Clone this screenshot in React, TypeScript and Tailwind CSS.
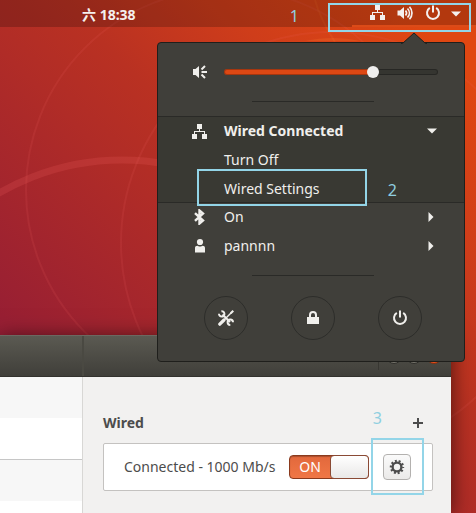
import type { ReactNode } from "react";

type IconProps = { className?: string };

function WiredIcon({ className = "size-[15px]" }: IconProps) {
  return (
    <svg viewBox="0 0 15 15" className={className} fill="currentColor" aria-hidden="true">
      <path d="M5 0h5v5H8v2h5v3h2v5h-5v-5h2V8H3v2h2v5H0v-5h2V7h5V5H5z" />
    </svg>
  );
}

function VolumeIcon({ className = "size-4" }: IconProps) {
  return (
    <svg viewBox="0 0 16 16" className={className} aria-hidden="true">
      <path d="M0.500 5.500H3L7 2v12l-4-3.500H0.500z" fill="currentColor" />
      <path
        d="M8.500 5.500c1.300 1.500 1.300 3.500 0 5M10.500 3.500c2.500 2.600 2.500 6.400 0 9M12.500 1.800c3.300 3.600 3.300 8.800 0 12.400"
        fill="none"
        stroke="currentColor"
        strokeWidth="1.700"
      />
    </svg>
  );
}

function SpeakerRaysIcon({ className = "size-4" }: IconProps) {
  return (
    <svg viewBox="0 0 16 16" className={className} aria-hidden="true">
      <path d="M1 5h2.500L7 2v12l-3.500-3H1z" fill="currentColor" />
      <path d="M9.500 5.500l3.500-3.500M9.500 8H15M9.500 10.500l3.500 3.500" fill="none" stroke="currentColor" strokeWidth="2" />
    </svg>
  );
}

function PowerIcon({ className = "size-4" }: IconProps) {
  return (
    <svg viewBox="0 0 16 16" className={className} fill="none" stroke="currentColor" strokeWidth="2" aria-hidden="true">
      <path d="M4.800 2.900a6 6 0 1 0 6.400 0" />
      <path d="M8 0.500v7" />
    </svg>
  );
}

function BluetoothIcon({ className = "size-4" }: IconProps) {
  return (
    <svg viewBox="0 0 16 16" className={className} fill="none" stroke="currentColor" strokeWidth="2.400" aria-hidden="true">
      <path d="M3 4.200l8 7.300-3.500 3V1.500l3.500 3-8 7.300" />
    </svg>
  );
}

function UserIcon({ className = "size-4" }: IconProps) {
  return (
    <svg viewBox="0 0 16 16" className={className} fill="currentColor" aria-hidden="true">
      <circle cx="8" cy="4" r="3.100" />
      <path d="M3 14.500V10c0-1.500 1-2.300 2.500-2.300C6.300 8.600 9.700 8.600 10.500 7.700 12 7.700 13 8.500 13 10v4.500z" />
    </svg>
  );
}

function ToolsIcon({ className = "size-4" }: IconProps) {
  return (
    <svg viewBox="0 0 16 16" className={className} aria-hidden="true">
      <path d="M1.800 14.200L6 10" fill="none" stroke="currentColor" strokeWidth="3.200" strokeLinecap="round" />
      <path d="M6 10l7.500-7.500" fill="none" stroke="currentColor" strokeWidth="1.400" />
      <path d="M12 2.500L14.500 0 16 1.500 13.500 4z" fill="currentColor" />
      <path d="M4.500 4.500l7.500 7.500" fill="none" stroke="currentColor" strokeWidth="2" />
      <path
        d="M3.400 1.200A2.700 2.700 0 1 1 1 3.800M15 12.200a2.700 2.700 0 1 0-2.700 2.800"
        fill="none"
        stroke="currentColor"
        strokeWidth="2"
      />
    </svg>
  );
}

function LockIcon({ className = "size-4" }: IconProps) {
  return (
    <svg viewBox="0 0 16 16" className={className} aria-hidden="true">
      <path d="M2 7h12v7H2z" fill="currentColor" />
      <path d="M5 7.500V5a3 3 0 0 1 6 0v2.500" fill="none" stroke="currentColor" strokeWidth="2" />
    </svg>
  );
}

function GearIcon({ className = "size-4" }: IconProps) {
  return (
    <svg viewBox="0 0 16 16" className={className} fill="none" stroke="currentColor" aria-hidden="true">
      <circle cx="8" cy="8" r="4.400" strokeWidth="2.400" />
      <circle cx="8" cy="8" r="6" strokeWidth="2.400" strokeDasharray="1.900 1.870" strokeDashoffset="0.950" />
    </svg>
  );
}

function CaretDown() {
  return (
    <svg viewBox="0 0 10 6" className="h-[6px] w-[10px]" fill="currentColor" aria-hidden="true">
      <path d="M0 0.500h10L5 5.500z" />
    </svg>
  );
}

function CaretRight() {
  return (
    <svg viewBox="0 0 6 10" className="mr-[3px] h-[10px] w-[6px]" fill="currentColor" aria-hidden="true">
      <path d="M0.500 0v10l5-5z" />
    </svg>
  );
}

function Wallpaper() {
  return (
    <svg viewBox="0 0 476 513" preserveAspectRatio="xMinYMin slice" className="absolute inset-0 size-full" fill="none" aria-hidden="true">
      <circle cx="122" cy="405" r="245" stroke="#f0606033" strokeWidth="7" />
      <circle cx="227" cy="190" r="201" stroke="#f0606022" strokeWidth="2" />
      <circle cx="332" cy="243" r="211" stroke="#f0606022" strokeWidth="2" />
      <path d="M315 0c4 15 11 28 20 42" stroke="#ff803022" strokeWidth="2" />
      <path d="M305 41c18-4 38-4 55 0z" fill="#ff803033" />
    </svg>
  );
}

function MenuRow({ icon, label, bold, caret }: { icon?: ReactNode; label: string; bold?: boolean; caret?: ReactNode }) {
  return (
    <button type="button" className="flex h-[29px] w-full items-center pr-[27px] pb-px pl-[34px] text-left">
      <span className="w-8 shrink-0">{icon}</span>
      <span className={bold ? "grow font-bold" : "grow"}>{label}</span>
      {caret}
    </button>
  );
}

function Separator() {
  return <hr className="mr-[90px] ml-auto w-[122px] border-0 border-t border-[#2a2a27]" />;
}

function RoundButton({ label, children }: { label: string; children: ReactNode }) {
  return (
    <button
      type="button"
      aria-label={label}
      className="flex size-11 items-center justify-center rounded-full border border-[#2d2d2a]"
    >
      {children}
    </button>
  );
}

function SystemMenu() {
  return (
    <section
      aria-label="System menu"
      className="absolute top-[42px] right-[11px] w-[308px] rounded-[4px] border border-[#1f1f1c] bg-[#403f3a] text-[14px] leading-5 text-[#f0efec]"
    >
      <svg viewBox="0 0 26 12" className="absolute -top-[11px] right-[37px] h-3 w-[26px]" aria-hidden="true">
        <path d="M0 12L2 11 13 1l11 10 2 1z" fill="#403f3a" />
        <path d="M0 11.500L2 11 13 1l11 10 2 .500" fill="none" stroke="#1f1f1c" />
      </svg>

      <div className="flex h-[58px] items-center pr-[26px] pl-[34px]">
        <SpeakerRaysIcon />
        <input
          type="range"
          aria-label="Volume"
          min={0}
          max={100}
          defaultValue={71}
          className="ml-4 h-[14px] min-w-0 grow appearance-none bg-transparent [&::-webkit-slider-runnable-track]:h-[6px] [&::-webkit-slider-runnable-track]:rounded-full [&::-webkit-slider-runnable-track]:bg-[linear-gradient(to_right,#dd4814_70%,#353530_70%)] [&::-webkit-slider-runnable-track]:shadow-[inset_0_0_0_1px_#00000040] [&::-webkit-slider-thumb]:mt-[-3px] [&::-webkit-slider-thumb]:size-3 [&::-webkit-slider-thumb]:appearance-none [&::-webkit-slider-thumb]:rounded-full [&::-webkit-slider-thumb]:bg-[#f0efee]"
        />
      </div>
      <Separator />

      <div className="mt-[14px] h-[87px] border-y border-[#2a2a27] bg-[#393933]">
        <MenuRow icon={<WiredIcon />} label="Wired Connected" bold caret={<CaretDown />} />
        <MenuRow label="Turn Off" />
        <MenuRow label="Wired Settings" />
      </div>
      <MenuRow icon={<BluetoothIcon />} label="On" caret={<CaretRight />} />
      <MenuRow icon={<UserIcon />} label="pannnn" caret={<CaretRight />} />

      <div className="pt-[14px]">
        <Separator />
      </div>
      <div className="flex justify-between pt-5 pr-[42px] pb-[21px] pl-[46px]">
        <RoundButton label="Settings">
          <ToolsIcon />
        </RoundButton>
        <RoundButton label="Lock">
          <LockIcon />
        </RoundButton>
        <RoundButton label="Power off">
          <PowerIcon />
        </RoundButton>
      </div>
    </section>
  );
}

function WindowControls() {
  return (
    <div className="flex h-7 items-center gap-1 self-center border-l border-[#383732] pr-[9px] pl-[7px]">
      <button type="button" aria-label="Minimize" className="size-4 rounded-full border border-[#2f2f2b] bg-[#77756d]" />
      <button type="button" aria-label="Maximize" className="size-4 rounded-full border border-[#2f2f2b] bg-[#77756d]" />
      <button type="button" aria-label="Close" className="size-4 rounded-full border border-[#7a3013] bg-[#e9501c]" />
    </div>
  );
}

function SettingsWindow() {
  return (
    <section
      aria-label="Network settings"
      className="absolute top-[335px] right-[25px] bottom-0 left-0 flex flex-col bg-[#f2f1f0] text-[14px] leading-5 text-[#4c4c4c] shadow-[0_3px_20px_#00000099]"
    >
      <header className="flex h-[42px] shrink-0 border-t border-b border-t-[#6b6961] border-b-[#33322e] bg-linear-to-b from-[#5b5a52] to-[#403f3a]">
        <div className="w-[84px] border-r-2 border-[#4a4942]" />
        <div className="grow" />
        <WindowControls />
      </header>
      <div className="flex min-h-0 grow">
        <nav aria-label="Panels" className="w-[83px] shrink-0 overflow-hidden border-r border-[#d8d7d5] bg-white">
          <div className="h-[41px] bg-[#f7f7f7]" />
          <div className="h-[42px] border-b border-[#c6c6c6]" />
          <div className="h-[41px] bg-[#f7f7f7]" />
        </nav>
        <main className="grow pt-9 pr-[18px] pl-5">
          <div className="flex h-5 items-center justify-between pr-[9px]">
            <h1 className="font-bold">Wired</h1>
            <button type="button" aria-label="Add connection">
              <svg viewBox="0 0 12 12" className="size-3" stroke="currentColor" strokeWidth="2" aria-hidden="true">
                <path d="M6 1v10M1 6h10" />
              </svg>
            </button>
          </div>
          <div className="mt-[10px] flex h-12 items-center rounded-[2px] border border-[#c4c2c0] bg-white pr-[21px] pl-5">
            <span className="grow whitespace-nowrap">Connected - 1000 Mb/s</span>
            <label className="flex h-6 w-20 rounded-[4px] border border-[#8a3a1d] bg-linear-to-b from-[#e2683c] to-[#f07746] shadow-[inset_0_1px_1px_#00000040]">
              <input type="checkbox" role="switch" defaultChecked className="sr-only" />
              <span className="w-10 text-center leading-[22px] text-white">ON</span>
              <span className="-my-px -mr-px grow rounded-[4px] border border-[#8a4a35] bg-linear-to-b from-white to-[#e9e8e7]" />
            </label>
            <button
              type="button"
              aria-label="Connection options"
              className="ml-[14px] flex h-[26px] w-7 items-center justify-center rounded-[4px] border border-[#b3b1af] bg-linear-to-b from-[#fafafa] to-[#ebeae9]"
            >
              <GearIcon />
            </button>
          </div>
        </main>
      </div>
    </section>
  );
}

function TopBar() {
  return (
    <header className="relative flex h-[27px] items-center justify-between bg-[#00000033] pr-[15px] pl-[82px] text-[14px] font-bold text-[#f4f0ee]">
      <time className="pt-[2px] leading-5">六 18:38</time>
      <div className="flex items-center gap-[10px]">
        <div className="flex gap-3 pb-px">
          <WiredIcon />
          <VolumeIcon />
          <PowerIcon />
        </div>
        <CaretDown />
      </div>
      <div className="absolute right-0 bottom-0 h-[2px] w-[124px] bg-[#dc4b18]" />
    </header>
  );
}

function Callouts() {
  return (
    <div className="pointer-events-none text-[16px] leading-5 text-[#8fcfe0]">
      <div className="absolute top-[3px] right-[5px] h-[29px] w-[143px] border-2 border-[#93d5e8]" />
      <span className="absolute top-[6px] right-[177px]">1</span>
      <div className="absolute top-[169px] right-[109px] h-[37px] w-[170px] border-2 border-[#93d5e8]" />
      <span className="absolute top-[180px] right-[79px]">2</span>
      <div className="absolute top-[438px] right-[52px] h-[57px] w-[53px] border-2 border-[#93d5e8]" />
      <span className="absolute top-[408px] right-[94px]">3</span>
    </div>
  );
}

export default function App() {
  return (
    <div className="relative h-screen overflow-hidden bg-[linear-gradient(45deg,#8f1c38_12%,#981f33_20%,#b02c27_47%,#b93122_58%,#cf3d1a_74%,#e04712_92%)] font-['Noto_Sans','Noto_Sans_CJK_SC',sans-serif]">
      <Wallpaper />
      <TopBar />
      <SettingsWindow />
      <SystemMenu />
      <Callouts />
    </div>
  );
}
